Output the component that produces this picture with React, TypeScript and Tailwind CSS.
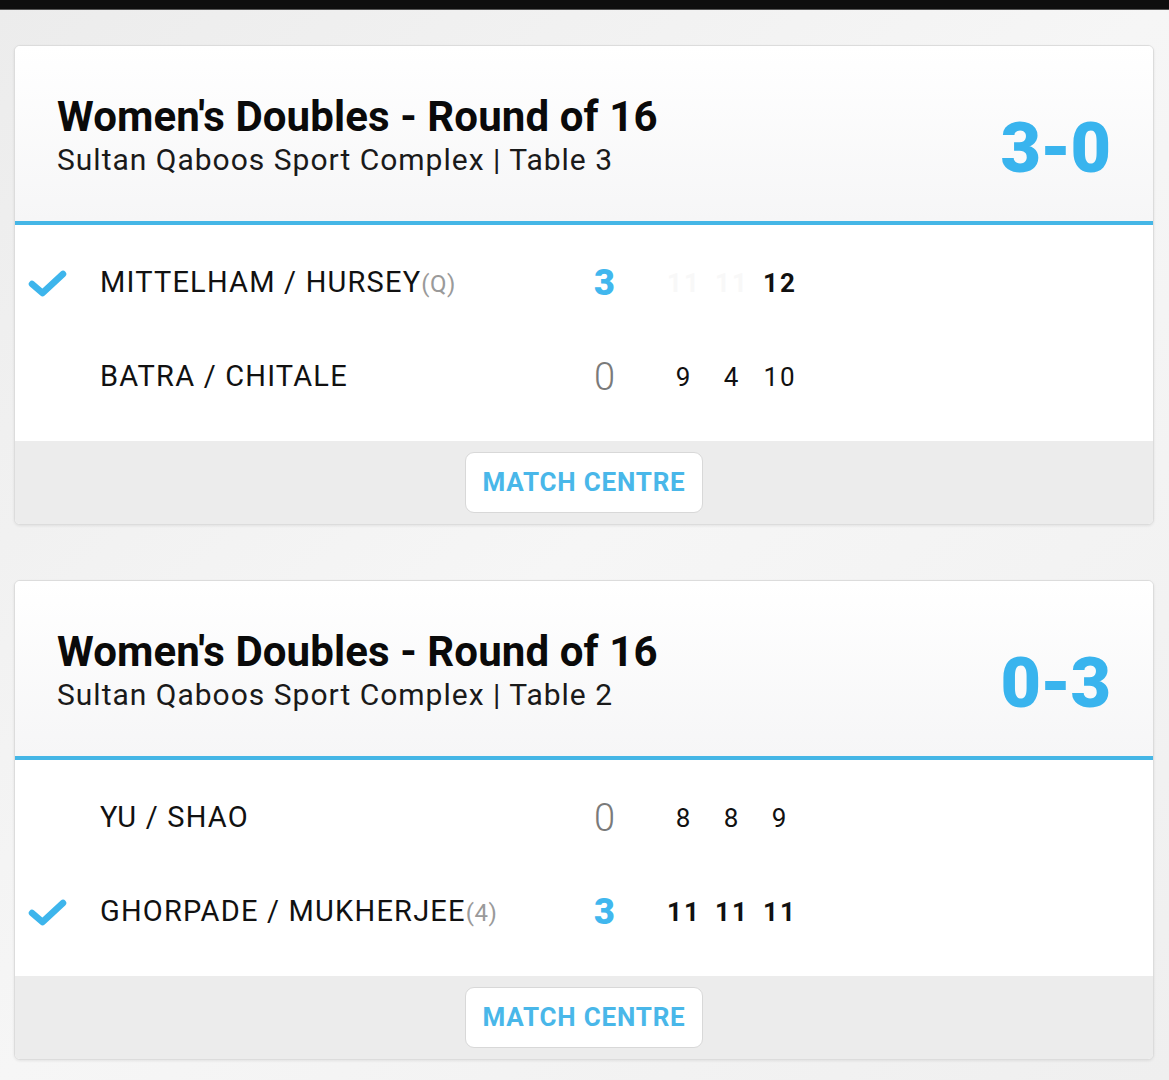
import React from "react";

type Row = {
  name: string;
  seed?: string;
  won: boolean;
  sets: string;
  games: { v: string; faint?: boolean }[];
};

type Match = {
  title: string;
  venue: string;
  score: string;
  rows: Row[];
};

const matches: Match[] = [
  {
    title: "Women's Doubles - Round of 16",
    venue: "Sultan Qaboos Sport Complex | Table 3",
    score: "3-0",
    rows: [
      {
        name: "MITTELHAM / HURSEY",
        seed: "(Q)",
        won: true,
        sets: "3",
        games: [{ v: "11", faint: true }, { v: "11", faint: true }, { v: "12" }],
      },
      {
        name: "BATRA / CHITALE",
        won: false,
        sets: "0",
        games: [{ v: "9" }, { v: "4" }, { v: "10" }],
      },
    ],
  },
  {
    title: "Women's Doubles - Round of 16",
    venue: "Sultan Qaboos Sport Complex | Table 2",
    score: "0-3",
    rows: [
      {
        name: "YU / SHAO",
        won: false,
        sets: "0",
        games: [{ v: "8" }, { v: "8" }, { v: "9" }],
      },
      {
        name: "GHORPADE / MUKHERJEE",
        seed: "(4)",
        won: true,
        sets: "3",
        games: [{ v: "11" }, { v: "11" }, { v: "11" }],
      },
    ],
  },
];

function Check() {
  return (
    <svg width="40" height="30" viewBox="0 0 40 30" fill="none">
      <path
        d="M4 16 L14.5 25 L35 6"
        stroke="#3db5ec"
        strokeWidth="6.5"
        strokeLinecap="round"
        strokeLinejoin="round"
      />
    </svg>
  );
}

function MatchCard({ m }: { m: Match }) {
  return (
    <div className="rounded-[6px] border border-[#dcdcdc] bg-white shadow-[0_1px_3px_rgba(0,0,0,0.08)] overflow-hidden">
      <div className="h-[175px] flex items-start justify-between pl-[42px] pr-[43px] bg-gradient-to-b from-white to-[#f6f6f7]">
        <div className="flex flex-col pt-[47px]">
          <div className="text-[42px] leading-[48px] font-bold text-[#0a0a0a] tracking-[0.1px] whitespace-nowrap">
            {m.title}
          </div>
          <div className="mt-[1px] text-[30px] leading-[36px] text-[#1a1a1a] tracking-[1px] whitespace-nowrap">
            {m.venue}
          </div>
        </div>
        <div className="mt-[67px] text-[70px] leading-none font-black text-[#39b4ee] tracking-[-1px]">
          {m.score}
        </div>
      </div>
      <div className="h-[4px] bg-[#45b6e6]" />
      <div className="pt-[11px] pb-[17px] bg-white">
        {m.rows.map((r, i) => (
          <div key={i} className="h-[94px] flex items-center">
            <div className="w-[85px] pl-[13px] flex items-center">
              {r.won ? <Check /> : null}
            </div>
            <div className="w-[494px] text-[29px] text-[#111] tracking-[1.2px] whitespace-nowrap">
              {r.name}
              {r.seed ? (
                <span className="text-[24px] text-[#9a9a9a] tracking-[0.5px]">{r.seed}</span>
              ) : null}
            </div>
            <div className="w-[65px]">
              <span
                className={
                  r.won
                    ? "text-[36px] font-black text-[#41b7ee] leading-none"
                    : "text-[38px] font-light text-[#7a7a7a] leading-none"
                }
              >
                {r.sets}
              </span>
            </div>
            {r.games.map((g, j) => (
              <div
                key={j}
                className={
                  "w-[48px] pl-[2px] text-center text-[26px] tracking-[2px] leading-none " +
                  (r.won ? "font-bold " : "font-normal ") +
                  (g.faint ? "text-[#f8f8f8]" : "text-[#111]")
                }
              >
                {g.v}
              </div>
            ))}
          </div>
        ))}
      </div>
      <div className="h-[83px] bg-[#ececec] flex justify-center pt-[11px]">
        <div className="w-[238px] h-[61px] rounded-[9px] border border-[#d8d8d8] bg-white flex items-center justify-center">
          <span className="text-[26px] font-bold text-[#49b7e9] tracking-[0.8px]">MATCH CENTRE</span>
        </div>
      </div>
    </div>
  );
}

export default function App() {
  return (
    <div
      className="min-h-[1080px] w-[1169px] bg-gradient-to-br from-[#ececec] via-[#f6f6f6] to-[#efefef]"
      style={{ fontFamily: "Roboto, 'Noto Sans', sans-serif" }}
    >
      <div className="h-[10px] bg-[#0e0e0e] border-b border-[#555]" />
      <div className="pl-[14px] pr-[15px] pt-[35px] flex flex-col gap-[55px]">
        {matches.map((m, i) => (
          <MatchCard key={i} m={m} />
        ))}
      </div>
    </div>
  );
}
